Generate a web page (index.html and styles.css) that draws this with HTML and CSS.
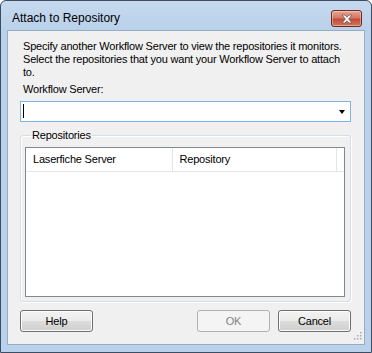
FILE: index.html
```html
<!DOCTYPE html>
<html>
<head>
<meta charset="utf-8">
<link rel="stylesheet" href="styles.css">
</head>
<body>
<div class="window">
  <div class="titlebar">
    <span class="title">Attach to Repository</span>
    <button class="close" aria-label="Close">
      <svg width="14" height="10" viewBox="0 0 14 10">
        <path d="M2 1 L5 1 L7 3.2 L9 1 L12 1 L8.6 5 L12 9 L9 9 L7 6.8 L5 9 L2 9 L5.4 5 Z" fill="#ffffff" stroke="#6b5a58" stroke-width="0.8" stroke-linejoin="round"/>
      </svg>
    </button>
  </div>
  <div class="content">
    <p class="intro">Specify another Workflow Server to view the repositories it monitors. Select the repositories that you want your Workflow Server to attach to.</p>
    <label class="field-label">Workflow Server:</label>
    <div class="combo">
      <span class="caret"></span>
      <span class="arrow"></span>
    </div>
    <fieldset class="group">
      <legend>Repositories</legend>
      <div class="listview">
        <div class="header">
          <div class="col col-server">Laserfiche Server</div>
          <div class="col col-repo">Repository</div>
          <div class="col col-fill"></div>
        </div>
      </div>
    </fieldset>
    <div class="buttons">
      <button class="btn">Help</button>
      <div class="spacer"></div>
      <button class="btn disabled">OK</button>
      <button class="btn">Cancel</button>
    </div>
    <svg class="grip" width="10" height="10" viewBox="0 0 10 10">
      <g fill="#a3aab5">
        <rect x="8" y="0" width="1.5" height="1.5"/>
        <rect x="5" y="3" width="1.5" height="1.5"/>
        <rect x="8" y="3" width="1.5" height="1.5"/>
        <rect x="2" y="6" width="1.5" height="1.5"/>
        <rect x="5" y="6" width="1.5" height="1.5"/>
        <rect x="8" y="6" width="1.5" height="1.5"/>
      </g>
    </svg>
  </div>
</div>
</body>
</html>
```
FILE: styles.css
```css
html, body {
  margin: 0;
  padding: 0;
  background: #ffffff;
}
body {
  font-family: "Liberation Sans", Arial, sans-serif;
  font-size: 11px;
  letter-spacing: -0.2px;
  color: #000;
}
.window {
  width: 372px;
  height: 353px;
  box-sizing: border-box;
  border: 1px solid #3c4d63;
  border-radius: 6px 6px 0 0;
  background: linear-gradient(#c6d9ee 0px, #b9d1ea 30px, #b9d1ea 100%);
  padding: 0 6px 7px 6px;
  display: flex;
  flex-direction: column;
}
.titlebar {
  height: 29px;
  display: flex;
  align-items: flex-start;
  position: relative;
}
.title {
  font-family: "Liberation Sans", Arial, sans-serif;
  font-size: 12px;
  letter-spacing: 0;
  margin-left: 5px;
  margin-top: 10px;
  color: #000;
}
.close {
  position: absolute;
  right: 3px;
  top: 9px;
  width: 31px;
  height: 17px;
  box-sizing: border-box;
  border: 1px solid #6e2a20;
  border-radius: 3px;
  background: linear-gradient(#e8a493 0%, #d47966 45%, #c24b35 55%, #d2775f 100%);
  box-shadow: inset 0 0 0 1px rgba(255,255,255,0.35);
  padding: 0;
  display: flex;
  align-items: center;
  justify-content: center;
}
.content {
  flex: 1;
  background: #f0f0f0;
  border: 1px solid #97acc5;
  position: relative;
  padding: 9px 13px 0 12px;
  display: flex;
  flex-direction: column;
}
.intro {
  margin: 0 0 0 3px;
  line-height: 13px;
  width: 326px;
}
.field-label {
  margin: 4px 0 0 3px;
  line-height: 13px;
  display: block;
}
.combo {
  margin-top: 5px;
  height: 21px;
  box-sizing: border-box;
  border: 1px solid #7eb4ea;
  background: #fff;
  position: relative;
}
.caret {
  position: absolute;
  left: 2px;
  top: 2px;
  width: 1px;
  height: 14px;
  background: #000;
}
.arrow {
  position: absolute;
  right: 5px;
  top: 8px;
  width: 0;
  height: 0;
  border-left: 3.5px solid transparent;
  border-right: 3.5px solid transparent;
  border-top: 4px solid #000;
}
.group {
  margin: 7px 0 0 0;
  padding: 5px 5px 4px 4px;
  border: 1px solid #d5dfe5;
  border-radius: 3px;
  box-shadow: inset 1px 1px 0 #fff, 1px 1px 0 #fff;
  min-width: 0;
}
.group legend {
  padding: 0 1px;
  margin-left: 6px;
  line-height: 13px;
}
.listview {
  height: 150px;
  box-sizing: border-box;
  border: 1px solid #828790;
  background: #fff;
}
.header {
  display: flex;
  height: 24px;
  border-bottom: 1px solid #e5e5e5;
  box-sizing: border-box;
}
.col {
  box-sizing: border-box;
  padding-left: 7px;
  line-height: 23px;
  border-right: 1px solid #e3e5e7;
}
.col-server {
  width: 147px;
}
.col-repo {
  width: 165px;
}
.col-fill {
  flex: 1;
  border-right: none;
}
.buttons {
  display: flex;
  gap: 8px;
  margin-top: 8px;
}
.spacer {
  flex: 1;
}
.btn {
  width: 73px;
  height: 22px;
  box-sizing: border-box;
  border: 1px solid #707070;
  border-radius: 3px;
  background: linear-gradient(#f2f2f2 0%, #ebebeb 50%, #dddddd 50%, #cfcfcf 100%);
  box-shadow: inset 0 0 0 1px #fcfcfc;
  font-family: "Liberation Sans", Arial, sans-serif;
  font-size: 11px;
  letter-spacing: -0.2px;
  color: #000;
  padding: 0;
}
.btn.disabled {
  border-color: #adb2b5;
  background: #f4f4f4;
  box-shadow: none;
  color: #838383;
}
.grip {
  position: absolute;
  right: 2px;
  bottom: 2px;
}
```
